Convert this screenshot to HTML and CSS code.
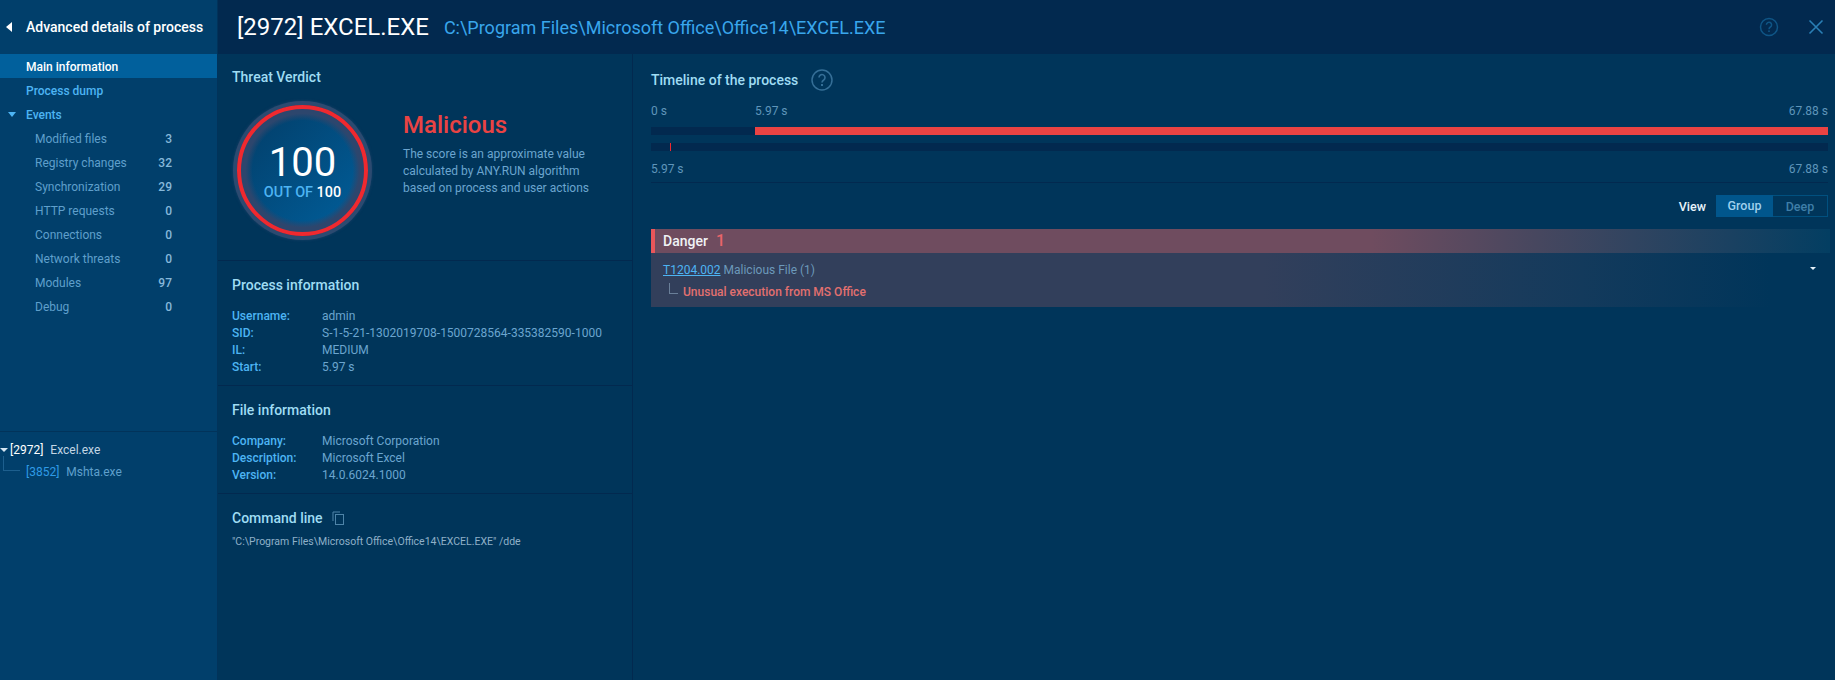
FILE: index.html
```html
<!DOCTYPE html>
<html lang="en">
<head>
  <meta charset="UTF-8" />
  <title>Advanced details of process</title>
  <link rel="stylesheet" href="styles.css">
</head>
<body>
  <aside class="sidebar">
    <div class="side-head">
      <span class="back-arrow"></span>
      <span>Advanced details of process</span>
    </div>
    <nav class="side-nav">
      <div class="nav-item active">Main information</div>
      <div class="nav-item">Process dump</div>
      <div class="nav-item"><span class="caret"></span>Events</div>
      <div class="nav-sub"><span>Modified files</span><span class="count">3</span></div>
      <div class="nav-sub"><span>Registry changes</span><span class="count">32</span></div>
      <div class="nav-sub"><span>Synchronization</span><span class="count">29</span></div>
      <div class="nav-sub"><span>HTTP requests</span><span class="count">0</span></div>
      <div class="nav-sub"><span>Connections</span><span class="count">0</span></div>
      <div class="nav-sub"><span>Network threats</span><span class="count">0</span></div>
      <div class="nav-sub"><span>Modules</span><span class="count">97</span></div>
      <div class="nav-sub"><span>Debug</span><span class="count">0</span></div>
    </nav>
    <div class="tree">
      <div class="tree-row root">
        <span class="tree-caret"></span><span class="pid">[2972]</span><span class="pname">Excel.exe</span>
      </div>
      <div class="tree-row child">
        <span class="tree-line"></span><span class="pid">[3852]</span><span class="pname">Mshta.exe</span>
      </div>
    </div>
  </aside>

  <div class="main">
    <header class="topbar">
      <h1>[2972] EXCEL.EXE</h1>
      <span class="path">C:\Program Files\Microsoft Office\Office14\EXCEL.EXE</span>
      <div class="top-icons">
        <svg class="icon-help" width="20" height="20" viewBox="0 0 20 20">
          <circle cx="10" cy="10" r="8.5" fill="none" stroke="currentColor" stroke-width="1.5"/>
          <path d="M7.4 7.8a2.6 2.6 0 1 1 4 2.2c-.9.6-1.4 1-1.4 2.2" fill="none" stroke="currentColor" stroke-width="1.5"/>
          <rect x="9.2" y="13.4" width="1.6" height="1.6" fill="currentColor"/>
        </svg>
        <svg class="icon-close" width="16" height="16" viewBox="0 0 16 16">
          <path d="M1.5 1.5l13 13M14.5 1.5l-13 13" fill="none" stroke="currentColor" stroke-width="1.6"/>
        </svg>
      </div>
    </header>

    <div class="columns">
      <section class="info">
        <div class="block verdict">
          <h2>Threat Verdict</h2>
          <div class="verdict-body">
            <div class="score">
              <div class="score-big">100</div>
              <div class="score-small">OUT OF <b>100</b></div>
            </div>
            <div class="verdict-text">
              <div class="verdict-name">Malicious</div>
              <p>The score is an approximate value calculated by ANY.RUN algorithm based on process and user actions</p>
            </div>
          </div>
        </div>

        <div class="block details">
          <h2>Process information</h2>
          <dl>
            <dt>Username:</dt><dd>admin</dd>
            <dt>SID:</dt><dd>S-1-5-21-1302019708-1500728564-335382590-1000</dd>
            <dt>IL:</dt><dd>MEDIUM</dd>
            <dt>Start:</dt><dd>5.97 s</dd>
          </dl>
        </div>

        <div class="block details">
          <h2>File information</h2>
          <dl>
            <dt>Company:</dt><dd>Microsoft Corporation</dd>
            <dt>Description:</dt><dd>Microsoft Excel</dd>
            <dt>Version:</dt><dd>14.0.6024.1000</dd>
          </dl>
        </div>

        <div class="block cmd">
          <h2>Command line
            <svg class="icon-copy" width="13" height="14" viewBox="0 0 13 14">
              <path d="M1 10V1h7" fill="none" stroke="currentColor" stroke-width="1"/>
              <rect x="3.5" y="3.5" width="8" height="10" fill="none" stroke="currentColor" stroke-width="1"/>
            </svg>
          </h2>
          <p>"C:\Program Files\Microsoft Office\Office14\EXCEL.EXE" /dde</p>
        </div>
      </section>

      <section class="timeline">
        <div class="tl-head">
          <h2>Timeline of the process</h2>
          <svg class="icon-help-sm" width="22" height="22" viewBox="0 0 22 22">
            <circle cx="11" cy="11" r="10" fill="none" stroke="currentColor" stroke-width="1.5"/>
            <path d="M8 8.6a3 3 0 1 1 4.7 2.4c-1.1.7-1.7 1.2-1.7 2.6" fill="none" stroke="currentColor" stroke-width="1.6"/>
            <rect x="10" y="15" width="2" height="2" fill="currentColor"/>
          </svg>
        </div>
        <div class="tl-labels top">
          <span class="tl-zero">0 s</span><span class="tl-mid">5.97 s</span><span class="tl-end">67.88 s</span>
        </div>
        <div class="bar"><div class="bar-gap"></div><div class="bar-fill"></div></div>
        <div class="bar second"><span class="tick"></span></div>
        <div class="tl-labels bottom">
          <span>5.97 s</span><span class="tl-end">67.88 s</span>
        </div>

        <div class="view-row">
          <span class="view-label">View</span>
          <div class="toggle">
            <span class="toggle-on">Group</span><span class="toggle-off">Deep</span>
          </div>
        </div>

        <div class="danger">
          <div class="danger-head">Danger<span class="danger-count">1</span></div>
          <div class="danger-body">
            <div class="danger-line">
              <a class="tech" href="#">T1204.002</a> Malicious File (1)
              <span class="small-caret"></span>
            </div>
            <div class="danger-sub"><span class="elbow"></span>Unusual execution from MS Office</div>
          </div>
        </div>
      </section>
    </div>
  </div>
</body>
</html>
```

FILE: styles.css
```css
/* --- Global --- */
* { box-sizing: border-box; margin: 0; padding: 0; }
html, body { height: 100%; }
body {
  font-family: 'Roboto', sans-serif;
  background: #00355a;
  color: #7fb2d6;
  display: flex;
  overflow: hidden;
}

/* --- Sidebar --- */
.sidebar {
  width: 218px;
  flex: none;
  background: #013f6b;
  border-right: 1px solid #02335a;
  display: flex;
  flex-direction: column;
}
.side-head {
  height: 54px;
  display: flex;
  align-items: center;
  padding-left: 6px;
  color: #fff;
  font-size: 14px;
  font-weight: 500;
}
.back-arrow {
  width: 0;
  height: 0;
  margin-right: 14px;
  border-top: 5px solid transparent;
  border-bottom: 5px solid transparent;
  border-right: 6px solid #fff;
}
.side-nav { height: 377px; }
.nav-item {
  height: 24px;
  line-height: 26px;
  padding-left: 26px;
  position: relative;
  color: #4db4f3;
  font-size: 12px;
  font-weight: 500;
}
.nav-item.active {
  background: #01609c;
  color: #fff;
}
.caret {
  position: absolute;
  left: 8px;
  top: 10px;
  border-left: 4px solid transparent;
  border-right: 4px solid transparent;
  border-top: 5px solid #4db4f3;
}
.nav-sub {
  height: 24px;
  display: flex;
  justify-content: space-between;
  align-items: center;
  padding: 1px 45px 0 35px;
  color: #5f9fcb;
  font-size: 12px;
}
.count { color: #86b8da; font-weight: 500; }

/* --- Process tree --- */
.tree {
  border-top: 1px solid #02335a;
  padding-top: 7px;
  font-size: 12px;
}
.tree-row {
  height: 22px;
  display: flex;
  align-items: center;
  position: relative;
}
.root { padding-left: 10px; }
.child { padding-left: 26px; }
.tree-caret {
  position: absolute;
  left: 0;
  top: 9px;
  border-left: 4px solid transparent;
  border-right: 4px solid transparent;
  border-top: 4px solid #d5e6f2;
}
.tree-line {
  position: absolute;
  left: 3px;
  top: -5px;
  width: 17px;
  height: 15px;
  border-left: 1px solid #1d5f8e;
  border-bottom: 1px solid #1d5f8e;
}
.pid { margin-right: 7px; }
.root .pid { color: #fff; }
.root .pname { color: #c3d6e4; }
.child .pid { color: #2f9be6; }
.child .pname { color: #5f9fcb; }

/* --- Main area --- */
.main {
  flex: 1;
  display: flex;
  flex-direction: column;
  min-width: 0;
}
.topbar {
  height: 54px;
  background: #02294f;
  display: flex;
  align-items: center;
  padding-left: 19px;
}
.topbar h1 {
  font-size: 24px;
  font-weight: 400;
  color: #fff;
  margin-right: 15px;
}
.path { font-size: 18px; color: #39a6ec; }
.top-icons {
  margin-left: auto;
  display: flex;
  align-items: center;
  gap: 29px;
  padding-right: 11px;
}
.icon-help { color: #0f5586; }
.icon-close { color: #2a7fb5; }

.columns { flex: 1; display: flex; min-height: 0; }

/* --- Left info column --- */
.info {
  width: 415px;
  flex: none;
  border-right: 1px solid #02294f;
}
.block {
  padding: 16px 14px 0 14px;
  border-bottom: 1px solid #02294f;
}
.block h2, .tl-head h2 {
  font-size: 14px;
  font-weight: 500;
  color: #9fdcf3;
  line-height: 17px;
}
.verdict { height: 207px; padding-top: 15px; }
.verdict-body {
  display: flex;
  margin-top: 19px;
}
.score {
  width: 131px;
  height: 131px;
  margin: 0 0 0 5px;
  flex: none;
  border-radius: 50%;
  border: 4.5px solid #f0292f;
  background:
    radial-gradient(circle, transparent 50px, #2d466d 57px),
    linear-gradient(135deg, #02426f 15%, #015a94 85%);
  box-shadow: 0 0 0 4px #2c4a70, 0 0 3px 4px rgba(44, 74, 112, 0.6);
  display: flex;
  flex-direction: column;
  align-items: center;
  justify-content: center;
}
.score-big {
  font-size: 40px;
  line-height: 42px;
  color: #fff;
  margin-top: 2px;
}
.score-small {
  font-size: 14.4px;
  line-height: 18px;
  font-weight: 500;
  color: #4db4f3;
}
.score-small b { color: #fff; font-weight: 500; }
.verdict-text { margin-left: 35px; padding-top: 5px; }
.verdict-name {
  font-size: 24px;
  font-weight: 500;
  line-height: 30px;
  color: #ea4343;
}
.verdict-text p {
  margin-top: 6px;
  width: 205px;
  font-size: 12px;
  line-height: 17px;
  color: #6ba5cf;
}
.details dl {
  display: grid;
  grid-template-columns: 90px 1fr;
  margin-top: 14px;
  font-size: 12px;
  line-height: 17px;
}
.details dt { font-weight: 500; color: #4db4f3; }
.details dd { color: #6ba5cf; }
.details { height: 125px; }
.details + .details { height: 108px; }
.cmd { border-bottom: 0; }
.icon-copy { color: #4e84a8; margin-left: 6px; vertical-align: -2px; }
.cmd p {
  margin-top: 8px;
  font-size: 10.5px;
  line-height: 14px;
  color: #8fb0c8;
}

/* --- Timeline column --- */
.timeline {
  flex: 1;
  min-width: 0;
  padding: 15px 7px 0 18px;
}
.tl-head {
  height: 22px;
  display: flex;
  align-items: center;
  gap: 13px;
}
.icon-help-sm { color: #356f97; }
.tl-labels {
  position: relative;
  display: flex;
  justify-content: space-between;
  font-size: 12px;
  color: #5f95ba;
  line-height: 16px;
}
.tl-labels.top { margin-top: 12px; }
.tl-labels.bottom { margin-top: 10px; padding-bottom: 5px; border-bottom: 1px solid #02294f; }
.tl-mid { position: absolute; left: 104px; }
.bar {
  height: 8px;
  margin-top: 8px;
  background: #02294f;
  display: flex;
  position: relative;
}
.bar.second { margin-top: 8px; }
.bar-gap { width: 104px; flex: none; }
.bar-fill { flex: 1; background: #ea4343; }
.tick {
  position: absolute;
  left: 19px;
  top: 0;
  width: 1px;
  height: 8px;
  background: #f0292f;
}
.view-row {
  margin-top: 12px;
  height: 22px;
  display: flex;
  justify-content: flex-end;
  align-items: center;
  font-size: 12.5px;
  font-weight: 500;
}
.view-label { color: #e6f3fb; margin-right: 10px; }
.toggle {
  display: flex;
  width: 112px;
  height: 22px;
  line-height: 22px;
  text-align: center;
  border: 1px solid #01507f;
}
.toggle-on { width: 57px; margin: -1px 0 -1px -1px; background: #01568c; color: #9fd0ee; }
.toggle-off { flex: 1; color: #3f7ea8; }

.danger { margin-top: 12px; margin-right: -2px; }
.danger-head {
  height: 24px;
  line-height: 24px;
  padding-left: 8px;
  border-left: 4px solid #e9565a;
  background: linear-gradient(to right, #6f4c5f 0, #6f4c5f 61%, #47475f 75%, #033e62 100%);
  color: #f0f2f5;
  font-size: 14px;
  font-weight: 500;
}
.danger-count { margin-left: 8px; color: #e9656a; font-size: 16px; }
.danger-body {
  height: 54px;
  padding: 9px 12px 0 12px;
  background: linear-gradient(to right, #323f5b 0, #323f5b 52%, #133a5c 79%, #00355a 95%);
  font-size: 12px;
}
.danger-line {
  position: relative;
  line-height: 17px;
  color: #6c99ba;
}
.tech { color: #4db4f3; }
.small-caret {
  position: absolute;
  right: 2px;
  top: 5px;
  border-left: 3px solid transparent;
  border-right: 3px solid transparent;
  border-top: 3px solid #e6f3fb;
}
.danger-sub {
  display: flex;
  align-items: center;
  margin-top: 5px;
  line-height: 17px;
  font-weight: 500;
  color: #e2706f;
}
.elbow {
  width: 9px;
  height: 11px;
  margin: -8px 5px 0 6px;
  border-left: 1px solid #6a7f99;
  border-bottom: 1px solid #6a7f99;
}
```
